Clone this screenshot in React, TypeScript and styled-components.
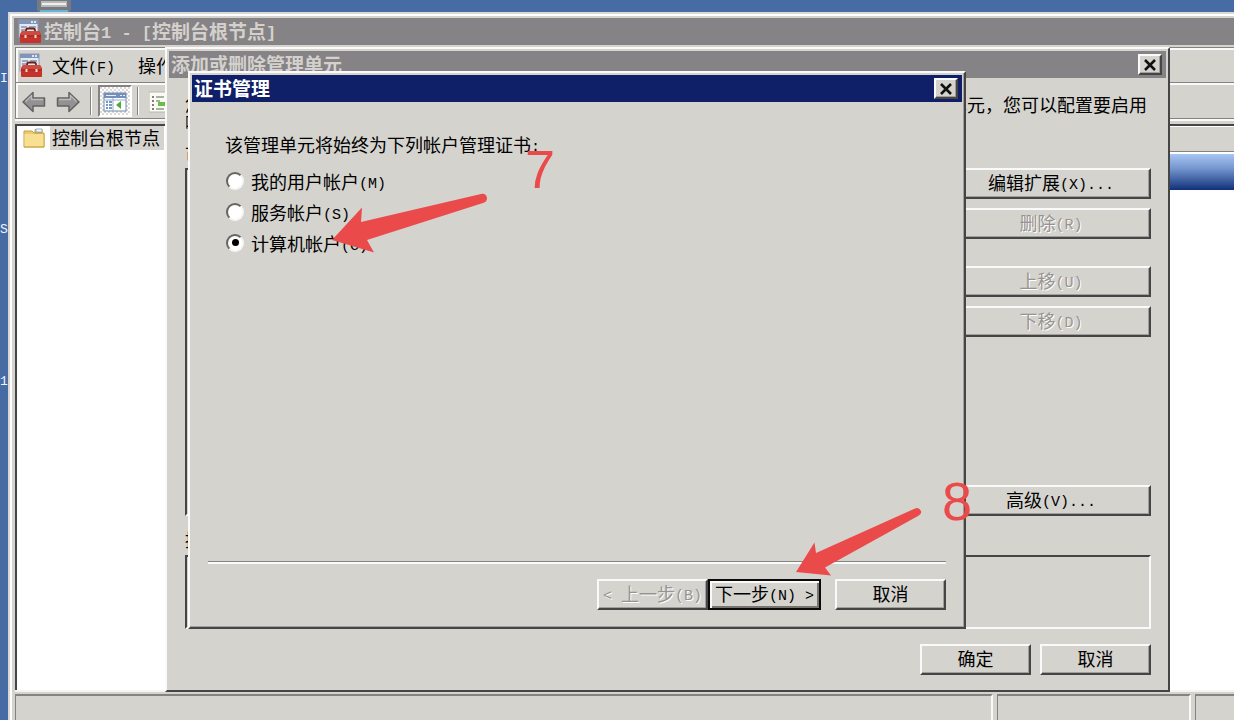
import React from "react";
import styled, { createGlobalStyle, css } from "styled-components";

const face = "#d5d3ce";
const dark = "#454545";
const mid = "#85837f";

const GlobalStyle = createGlobalStyle`
  * { box-sizing: border-box; }
  html, body, #root { height: 100%; }
  body {
    margin: 0;
    overflow: hidden;
    color: #000;
    font: 18px/20px "Noto Sans CJK SC", sans-serif;
  }
`;

/* ---------- text ---------- */

const Latin = styled.span<{ $size: number }>`
  font-family: "Liberation Mono", monospace;
  font-size: ${(p) => p.$size}px;
  line-height: 0;
  vertical-align: 1px;
  white-space: pre;
`;

function Mixed({ text, size = 15 }: { text: string; size?: number }) {
  return (
    <span>
      {text.split(/([\x20-\x7e]+)/).map((part, i) =>
        i % 2 ? (
          <Latin key={i} $size={size}>
            {part}
          </Latin>
        ) : (
          part
        )
      )}
    </span>
  );
}

/* ---------- shared window parts ---------- */

const Desktop = styled.div`
  position: relative;
  height: 100vh;
  overflow: hidden;
  background: #476ca4;
`;

const TitleBar = styled.header<{ $active?: boolean }>`
  display: flex;
  align-items: center;
  flex: none;
  height: 27px;
  padding: 0 4px 0 2px;
  background: ${(p) => (p.$active ? "#0f1f68" : "#858385")};
  color: ${(p) => (p.$active ? "#fff" : "#d4d1cd")};
`;

const Title = styled.h1`
  flex: 1;
  margin: 0;
  font-size: 19px;
  line-height: 24px;
  padding-bottom: 2px;
  font-weight: 700;
  white-space: nowrap;
`;

const raised = css`
  border: 2px solid;
  border-color: #fafafa ${dark} ${dark} #fafafa;
  background: ${face};
  box-shadow: inset -1px -1px 0 #a19f9b;
`;

const sunken = css`
  border: 2px solid;
  border-color: ${dark} #fafafa #fafafa ${dark};
`;

const CloseButton = styled.button`
  ${raised}
  display: grid;
  place-items: center;
  width: 24px;
  height: 21px;
  padding: 0;
`;

const CloseIcon = () => (
  <svg width="14" height="12" viewBox="0 0 14 12" aria-hidden="true">
    <path d="M2 1l10 10M12 1L2 11" stroke="#111" strokeWidth="2.6" />
  </svg>
);

const PushButton = styled.button<{ $default?: boolean; $wide?: boolean }>`
  ${raised}
  width: ${(p) => (p.$wide ? "200px" : "111px")};
  height: 31px;
  padding: 0 0 3px;
  font: inherit;
  color: #000;
  white-space: nowrap;
  ${(p) =>
    p.$default &&
    css`
      width: 113px;
      border-color: #0a0a0a;
      box-shadow: inset 2px 2px 0 #fafafa, inset -2px -2px 0 #77756f;
    `}
  &:disabled {
    color: #969490;
    text-shadow: 1px 1px 0 #fff;
  }
`;

/* ---------- console window ---------- */

const ConsoleWindow = styled.main`
  position: absolute;
  inset: 12px 0 -20px 8px;
  display: flex;
  flex-direction: column;
  padding: 4px 0 0 4px;
  border: 2px solid #dad7d6;
  border-width: 2px 0 0 2px;
  background: ${face};
  box-shadow: inset 2px 2px 0 #fff;
`;

const ConsoleTitle = styled(TitleBar)`
  gap: 2px;
  margin-bottom: 2px;
  padding-left: 4px;
`;

const Band = styled.div`
  display: flex;
  align-items: center;
  flex: none;
  height: 36px;
  margin-left: 1px;
  padding-left: 3px;
  border: 1px solid ${mid};
  border-width: 1px 0 1px 1px;
  box-shadow: inset 2px 2px 0 #fafafa;
`;

const ToolBand = styled(Band)`
  gap: 10px;
  margin-bottom: 5px;
  padding-left: 6px;
  border-top: 0;
  box-shadow: inset 2px 2px 0 #fafafa, 0 2px 0 #fafafa;
`;

const MenuItem = styled.button`
  padding: 0;
  margin-left: 9px;
  border: 0;
  background: none;
  font: inherit;
  color: #000;
  white-space: nowrap;
  & + & { margin-left: 23px; }
`;

const ToolButton = styled.button<{ $pressed?: boolean }>`
  display: grid;
  place-items: center;
  flex: none;
  width: 24px;
  height: 32px;
  padding: 2px 0 0;
  border: 0;
  background: none;
  ${(p) =>
    p.$pressed &&
    css`
      width: 34px;
      margin: 0 -5px 0 -4px;
      border: 2px solid;
      border-color: #85837f #fff #fff #85837f;
      background: repeating-conic-gradient(#fff 0 25%, #dcdad6 0 50%) 0 0 / 4px 4px;
    `}
`;

const Separator = styled.span`
  flex: none;
  width: 2px;
  height: 28px;
  border-left: 1px solid #85837f;
  background: #fff;
`;

const Panes = styled.div`
  display: grid;
  grid-template-columns: 200px 1fr;
  flex: 1;
  margin-left: 1px;
  border: 2px solid ${dark};
  border-width: 2px 0 0 2px;
  background: #fff;
  box-shadow: 0 2px 0 #f5f4f2;
`;

const Tree = styled.ul`
  margin: 0;
  padding: 0 0 0 6px;
  list-style: none;
`;

const TreeItem = styled.li`
  display: flex;
  align-items: center;
  gap: 5px;
  height: 24px;
  white-space: nowrap;
`;

const TreeLabel = styled.span`
  padding: 1px 4px 3px 2px;
  background: ${face};
`;

const Results = styled.section`
  display: flex;
  flex-direction: column;
`;

const ResultsHeader = styled.div`
  height: 26px;
  border-bottom: 1px solid ${mid};
  background: ${face};
  box-shadow: inset 0 1px 0 #fff;
`;

const ResultsBanner = styled.div`
  height: 36px;
  margin-top: 2px;
  background: linear-gradient(#a9c6f3, #7596cf 40%, #11307a);
`;

const StatusBar = styled.footer`
  display: flex;
  gap: 4px;
  flex: none;
  height: 46px;
  margin: 4px 0 0 1px;
`;

const StatusCell = styled.div<{ $width?: number }>`
  flex: ${(p) => (p.$width ? `0 0 ${p.$width}px` : "1")};
  border: 1px solid #85837f;
  border-width: 2px 2px 0 1px;
  border-right-color: #fafafa;
  &:last-child { border-right: 0; }
`;

/* ---------- snap-in dialog ---------- */

const Dialog = styled.section`
  position: absolute;
  display: flex;
  flex-direction: column;
  padding: 2px;
  border: 2px solid;
  border-color: #fafafa ${dark} ${dark} #fafafa;
  background: ${face};
`;

const SnapInDialog = styled(Dialog)`
  inset: 47px 64px 28px 165px;
`;

const SnapInBody = styled.div`
  display: flex;
  flex-direction: column;
  flex: 1;
  padding: 17px 15px 12px 16px;
`;

const IntroLine = styled.p`
  display: flex;
  justify-content: space-between;
  margin: 0 4px 0 0;
  line-height: 18px;
  white-space: nowrap;
`;

const FieldLabel = styled.span`
  height: 18px;
  margin-top: 14px;
  line-height: 18px;
`;

const Columns = styled.div`
  display: flex;
  justify-content: space-between;
  height: 348px;
  margin-top: 5px;
`;

const SnapInList = styled.div`
  ${sunken}
  flex: 0 0 400px;
`;

const ButtonColumn = styled.div`
  display: flex;
  flex-direction: column;
  justify-content: space-between;
`;

const ButtonGroup = styled.div`
  display: flex;
  flex-direction: column;
  gap: 9px;
  & + & { margin-top: 27px; }
`;

const Description = styled.div`
  ${sunken}
  height: 74px;
  margin-top: 7px;
`;

const DialogButtons = styled.div`
  display: flex;
  justify-content: flex-end;
  gap: 9px;
  margin-top: 15px;
`;

/* ---------- certificate wizard ---------- */

const WizardDialog = styled(Dialog)`
  left: 188px;
  top: 71px;
  width: 778px;
  height: 558px;
  box-shadow: inset -1px -1px 0 #a19f9b;
`;

const WizardBody = styled.div`
  display: flex;
  flex-direction: column;
  flex: 1;
  padding: 32px 16px 15px 16px;
`;

const Choices = styled.fieldset`
  display: flex;
  flex-direction: column;
  flex: 1;
  margin: 0;
  padding: 0 0 0 17px;
  border: 0;
`;

const Legend = styled.legend`
  height: 31px;
  padding: 0;
`;

const Choice = styled.label`
  display: flex;
  align-items: center;
  gap: 7px;
  height: 31px;
`;

const Radio = styled.input`
  appearance: none;
  display: grid;
  place-items: center;
  width: 18px;
  height: 18px;
  margin: 0 0 0 1px;
  border: 2px solid;
  border-color: #66645f #f7f6f4 #f7f6f4 #66645f;
  border-radius: 50%;
  background: #fff;
  &:checked::before {
    content: "";
    width: 7px;
    height: 7px;
    border-radius: 50%;
    background: #000;
  }
`;

const WizardFooter = styled.footer`
  display: flex;
  justify-content: flex-end;
  padding-top: 17px;
  border-top: 1px solid ${mid};
  box-shadow: inset 0 2px 0 #fafafa;
  & > :last-child { margin-left: 14px; }
`;

/* ---------- desktop items and annotations ---------- */

const DesktopLabel = styled.span<{ $top: number }>`
  position: absolute;
  left: 0;
  top: ${(p) => p.$top}px;
  color: #eef4ff;
`;

const DesktopIcon = styled.svg`
  position: absolute;
  left: 36px;
  top: 0;
`;

const Mark = styled.span<{ $x: number; $y: number }>`
  position: absolute;
  left: ${(p) => p.$x}px;
  top: ${(p) => p.$y}px;
  color: #eb4a4a;
  font: 54px/54px "Liberation Sans", sans-serif;
`;

const Pointers = styled.svg`
  position: absolute;
  left: 0;
  top: 0;
  pointer-events: none;
`;

/* ---------- icons ---------- */

const ConsoleIcon = () => (
  <svg width="24" height="25" viewBox="0 0 24 25" aria-hidden="true">
    <rect x="1" y="1" width="19" height="17" fill="#e4e8ef" stroke="#8f9cb2" />
    <rect x="1" y="1" width="19" height="4" fill="#7f96ba" />
    <path d="M13 3h2M16 3h2" stroke="#fff" strokeWidth="1.4" />
    <path d="M3 8h6M3 11h4M11 8h7" stroke="#8193b0" strokeWidth="1.5" />
    <path d="M8 13v-1.500q0-2 2-2h5q2 0 2 2V13" fill="none" stroke="#6a2420" strokeWidth="1.800" />
    <path d="M4 12h17l2 3v8q0 1-1 1H3q-1 0-1-1v-8z" fill="#c4342b" />
    <path d="M4 12h17l2 4H2z" fill="#cf4a3f" />
    <path d="M2 17h21" stroke="#a3251e" />
    <path d="M7.500 16v3M17.500 16v3" stroke="#f0dcd6" strokeWidth="2" />
  </svg>
);

const ArrowIcon = ({ forward }: { forward?: boolean }) => (
  <svg width="24" height="22" viewBox="0 0 24 22" aria-hidden="true">
    <g transform={forward ? "translate(24 0) scale(-1 1)" : undefined}>
      <path d="M1 11L11 1.500V7h11.500v8H11v5.500z" fill="#929292" stroke="#626262" strokeWidth="1.500" strokeLinejoin="round" />
      <path d="M3.500 10.500L9.500 4.500V8.500H21" fill="none" stroke="#bcbcbc" strokeWidth="1.300" />
    </g>
  </svg>
);

const TreeToggleIcon = () => (
  <svg width="24" height="20" viewBox="0 0 24 20" aria-hidden="true">
    <rect x="1" y="1" width="22" height="18" fill="#fff" stroke="#7289ae" />
    <rect x="1" y="1" width="22" height="5" fill="#748fbb" />
    <path d="M17 3.500h2M20 3.500h2M3 3.500h10" stroke="#e5edf9" strokeWidth="1.200" />
    <path d="M10 6v13M1 8h22" stroke="#9aaccb" />
    <path d="M3 10h2M3 13h2M3 16h2M6 10h3M6 13h3M6 16h3" stroke="#4675b6" strokeWidth="1.500" />
    <path d="M18 9v8l-5-4z" fill="#4dac34" />
  </svg>
);

const ExportIcon = () => (
  <svg width="24" height="24" viewBox="1 0 24 24" aria-hidden="true">
    <path d="M1 2h18v20H1z" fill="#fcfbf3" stroke="#b8b6a8" />
    <path d="M4 7h2M4 11h2M4 15h2M4 19h2" stroke="#555" strokeWidth="1.600" />
    <path d="M8 7h8M8 11h4M8 19h8" stroke="#8b9c89" strokeWidth="1.400" />
    <path d="M10 12h7V9l6 5-6 5v-3h-7z" fill="#6bbd48" />
  </svg>
);

const FolderIcon = () => (
  <svg width="22" height="20" viewBox="0 0 22 20" aria-hidden="true">
    <path d="M1 3h8l2 2h8V1.500h-7V5h9v14H1z" fill="#eccb70" stroke="#c39d45" />
    <path d="M13 1h6v3h-6z" fill="#f5f8ff" stroke="#9eacbf" />
    <path d="M1.500 6H21v12.500H1.500z" fill="#f8df91" />
    <path d="M1 19h20V6" fill="none" stroke="#cda94f" />
  </svg>
);

export default function App() {
  return (
    <Desktop>
      <GlobalStyle />
      <DesktopIcon width="36" height="12" viewBox="0 0 36 12" aria-hidden="true">
        <path d="M1 0h34v9q0 3-3 3H4q-3 0-3-3z" fill="#777b7f" />
        <path d="M5 1h26v6H5z" fill="#b8b9b9" />
        <path d="M6 4h24" stroke="#eee" strokeWidth="2" />
        <path d="M4 11h28" stroke="#65b4dc" strokeWidth="2" />
      </DesktopIcon>
      <DesktopLabel $top={65}><Latin $size={13}>I</Latin></DesktopLabel>
      <DesktopLabel $top={216}><Latin $size={13}>S</Latin></DesktopLabel>
      <DesktopLabel $top={368}><Latin $size={13}>1</Latin></DesktopLabel>

      <ConsoleWindow>
        <ConsoleTitle>
          <ConsoleIcon />
          <Title><Mixed text="控制台1 - [控制台根节点]" size={17} /></Title>
        </ConsoleTitle>
        <Band as="nav">
          <ConsoleIcon />
          <MenuItem><Mixed text="文件(F)" /></MenuItem>
          <MenuItem><Mixed text="操作(A)" /></MenuItem>
        </Band>
        <ToolBand>
          <ToolButton aria-label="后退"><ArrowIcon /></ToolButton>
          <ToolButton aria-label="前进"><ArrowIcon forward /></ToolButton>
          <Separator />
          <ToolButton $pressed aria-label="显示控制台树"><TreeToggleIcon /></ToolButton>
          <Separator />
          <ToolButton aria-label="导出列表"><ExportIcon /></ToolButton>
        </ToolBand>
        <Panes>
          <Tree>
            <TreeItem>
              <FolderIcon />
              <TreeLabel>控制台根节点</TreeLabel>
            </TreeItem>
          </Tree>
          <Results>
            <ResultsHeader />
            <ResultsBanner />
          </Results>
        </Panes>
        <StatusBar>
          <StatusCell />
          <StatusCell $width={194} />
          <StatusCell $width={39} />
        </StatusBar>
      </ConsoleWindow>

      <SnapInDialog aria-label="添加或删除管理单元">
        <TitleBar>
          <Title>添加或删除管理单元</Title>
          <CloseButton aria-label="关闭"><CloseIcon /></CloseButton>
        </TitleBar>
        <SnapInBody>
          <IntroLine>
            <span>您可以从计算机上为此控制台选择可用的管理单元。</span>
            <span>对于可扩展的管理单元，您可以配置要启用</span>
          </IntroLine>
          <IntroLine>哪些扩展。</IntroLine>
          <FieldLabel><Mixed text="可用的管理单元(S):" /></FieldLabel>
          <Columns>
            <SnapInList />
            <ButtonColumn>
              <div>
                <ButtonGroup>
                  <PushButton $wide><Mixed text="编辑扩展(X)..." /></PushButton>
                  <PushButton $wide disabled><Mixed text="删除(R)" /></PushButton>
                </ButtonGroup>
                <ButtonGroup>
                  <PushButton $wide disabled><Mixed text="上移(U)" /></PushButton>
                  <PushButton $wide disabled><Mixed text="下移(D)" /></PushButton>
                </ButtonGroup>
              </div>
              <PushButton $wide><Mixed text="高级(V)..." /></PushButton>
            </ButtonColumn>
          </Columns>
          <FieldLabel><Mixed text="描述:" /></FieldLabel>
          <Description />
          <DialogButtons>
            <PushButton>确定</PushButton>
            <PushButton>取消</PushButton>
          </DialogButtons>
        </SnapInBody>
      </SnapInDialog>

      <WizardDialog aria-label="证书管理">
        <TitleBar $active>
          <Title>证书管理</Title>
          <CloseButton aria-label="关闭"><CloseIcon /></CloseButton>
        </TitleBar>
        <WizardBody>
          <Choices>
            <Legend><Mixed text="该管理单元将始终为下列帐户管理证书:" /></Legend>
            <Choice>
              <Radio type="radio" name="account" />
              <Mixed text="我的用户帐户(M)" />
            </Choice>
            <Choice>
              <Radio type="radio" name="account" />
              <Mixed text="服务帐户(S)" />
            </Choice>
            <Choice>
              <Radio type="radio" name="account" defaultChecked />
              <Mixed text="计算机帐户(C)" />
            </Choice>
          </Choices>
          <WizardFooter>
            <PushButton disabled><Mixed text="< 上一步(B)" /></PushButton>
            <PushButton $default><Mixed text="下一步(N) >" /></PushButton>
            <PushButton>取消</PushButton>
          </WizardFooter>
        </WizardBody>
      </WizardDialog>

      <Pointers width="1000" height="620" viewBox="0 0 1000 620" fill="#eb4a4a" aria-hidden="true">
        <path d="M332 240L362 207.500L361 222L481 194Q486 193 487 198Q487 202 483 203L367 240L374 252.500Z" />
        <path d="M796 572L814.500 542.500L816 553L915 508.500Q919 507 921 511Q922 514 918 516L825 567.500L831 575.500Z" />
      </Pointers>
      <Mark $x={525} $y={142}>7</Mark>
      <Mark $x={942} $y={474}>8</Mark>
    </Desktop>
  );
}
